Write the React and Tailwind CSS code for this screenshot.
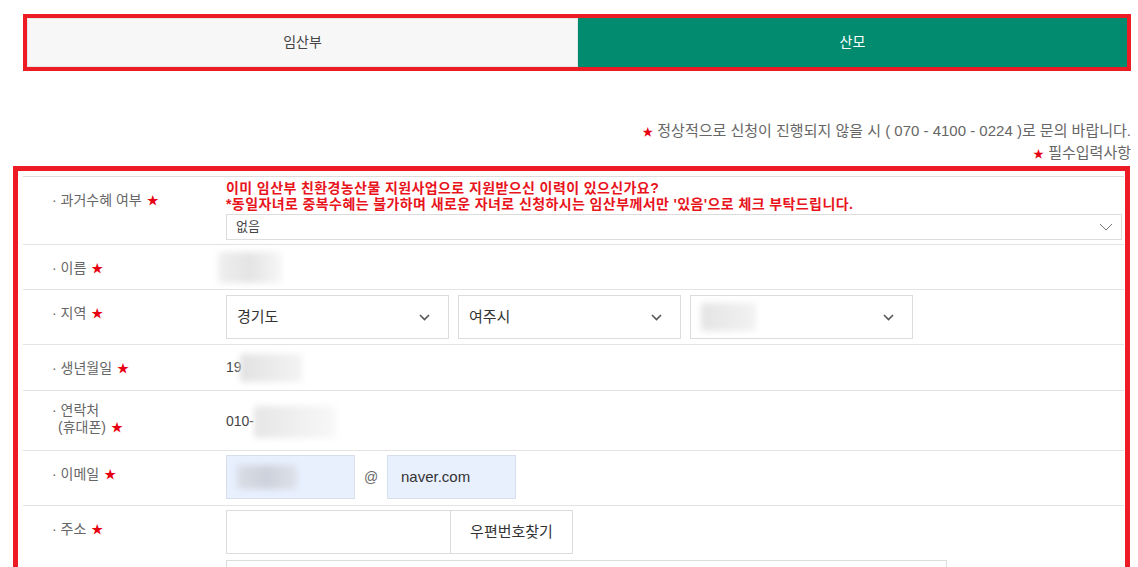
import React from 'react'

const FONT = "font-['Liberation_Sans','Noto_Sans_CJK_KR',sans-serif]"

function Star() {
  return <span className="ml-[5px] text-[12px] text-[#e60012]">★</span>
}

function Chevron({ thin = false }) {
  if (thin) {
    return (
      <svg width="14" height="8" viewBox="0 0 14 8" className="shrink-0">
        <polyline points="1,1 7,7 13,1" fill="none" stroke="#777" strokeWidth="1" />
      </svg>
    )
  }
  return (
    <svg width="11" height="7" viewBox="0 0 11 7" className="shrink-0">
      <polyline points="1,1 5.5,5.5 10,1" fill="none" stroke="#555" strokeWidth="1.6" />
    </svg>
  )
}

function Blur({ className }) {
  return <div className={`rounded-[3px] blur-[3px] ${className}`} />
}

function Row({ label, height, labelPad = 'pt-[15px]', children, valueClass = '' }) {
  return (
    <div className={`flex border-b border-[#e3e3e3] ${height}`}>
      <div className={`w-[203px] shrink-0 pl-[29px] ${labelPad} text-[14px] leading-[17px] text-[#666]`}>
        {label}
      </div>
      <div className={`flex-1 ${valueClass}`}>{children}</div>
    </div>
  )
}

function Select({ value, blur = false }) {
  return (
    <div className="flex h-[44px] w-[223px] items-center justify-between border border-[#dcdcdc] bg-white pl-[10px] pr-[18px]">
      {blur ? (
        <Blur className="h-[28px] w-[55px] bg-linear-to-r from-[#e4e4e4] to-[#f2f2f2]" />
      ) : (
        <span className="text-[15px] text-[#333]">{value}</span>
      )}
      <Chevron />
    </div>
  )
}

export default function App() {
  return (
    <div className={`relative h-[567px] w-[1138px] overflow-hidden bg-white ${FONT}`}>
      {/* tabs */}
      <div className="ml-[23px] mt-[14px] flex h-[57px] w-[1108px] border-[4px] border-[#ed1c24]">
        <div className="flex flex-1 items-center justify-center border border-[#e6e6e6] bg-[#f7f7f7] text-[14px] text-[#444]">
          임산부
        </div>
        <div className="flex flex-1 items-center justify-center bg-[#038b6f] text-[14px] text-white">
          산모
        </div>
      </div>

      {/* notice */}
      <div className="mt-[50px] pr-[7px] text-right text-[15px] leading-[20px] text-[#666]">
        <span className="text-[11px] text-[#e60012]">★</span> 정상적으로 신청이 진행되지 않을 시 ( 070 - 4100 - 0224 )로 문의 바랍니다.
      </div>
      <div className="mt-[1px] pr-[7px] text-right text-[15px] leading-[20px] text-[#666]">
        <span className="text-[11px] text-[#e60012]">★</span> 필수입력사항
      </div>

      {/* form */}
      <div className="ml-[13px] mt-[2px] h-[420px] w-[1117px] border-[5px] border-[#ed1c24] pl-[5px] pr-px pt-[5px]">
        <div className="border-t border-[#dcdcdc]">
          <Row label={<>· 과거수혜 여부<Star /></>} height="h-[68px]" valueClass="pt-[3px] pr-[2px]">
            <div className="text-[14px] font-bold leading-[16px] tracking-[0.4px] text-[#e8141c]">
              이미 임산부 친환경농산물 지원사업으로 지원받으신 이력이 있으신가요?
            </div>
            <div className="text-[14px] font-bold leading-[16px] tracking-[0.4px] text-[#e8141c]">
              *동일자녀로 중복수혜는 불가하며 새로운 자녀로 신청하시는 임산부께서만 '있음'으로 체크 부탁드립니다.
            </div>
            <div className="mt-[2px] flex h-[26px] items-center justify-between border border-[#dcdcdc] pl-[9px] pr-[8px]">
              <span className="text-[13px] text-[#444]">없음</span>
              <Chevron thin />
            </div>
          </Row>

          <Row label={<>· 이름<Star /></>} height="h-[45px]" valueClass="pt-[7px]">
            <Blur className="ml-[-8px] h-[31px] w-[64px] bg-linear-to-r from-[#efefef] via-[#e4e4e4] to-[#f7f7f7]" />
          </Row>

          <Row label={<>· 지역<Star /></>} height="h-[55px]" valueClass="pt-[5px]">
            <div className="flex gap-[9px]">
              <Select value="경기도" />
              <Select value="여주시" />
              <Select blur />
            </div>
          </Row>

          <Row label={<>· 생년월일<Star /></>} height="h-[46px]" valueClass="flex items-center">
            <span className="text-[14px] text-[#444]">19</span>
            <Blur className="ml-[-2px] h-[28px] w-[62px] bg-linear-to-r from-[#e2e2e2] to-[#f3f3f3]" />
          </Row>

          <Row
            label={<><div>· 연락처</div><div className="pl-[6px]">(휴대폰)<Star /></div></>}
            height="h-[60px]"
            labelPad="pt-[11px]"
            valueClass="flex items-center pt-[2px]"
          >
            <span className="text-[14px] text-[#444]">010-</span>
            <Blur className="h-[32px] w-[82px] bg-linear-to-r from-[#e6e6e6] to-[#f8f8f8]" />
          </Row>

          <Row label={<>· 이메일<Star /></>} height="h-[55px]" valueClass="pt-[4px]">
            <div className="flex items-center">
              <div className="flex h-[44px] w-[129px] items-center border border-[#d8dfec] bg-[#e8f0fe] pl-[10px]">
                <Blur className="h-[24px] w-[60px] bg-linear-to-r from-[#d9dde6] via-[#cdd1db] to-[#dde2ea]" />
              </div>
              <span className="w-[32px] text-center text-[14px] text-[#666]">@</span>
              <div className="flex h-[44px] w-[129px] items-center border border-[#d8dfec] bg-[#e8f0fe] pl-[13px] text-[15px] text-[#333]">
                naver.com
              </div>
            </div>
          </Row>

          <Row label={<>· 주소<Star /></>} height="h-[70px]" valueClass="pt-[4px]">
            <div className="flex">
              <div className="h-[44px] w-[225px] border border-[#dcdcdc] bg-white" />
              <div className="flex h-[44px] w-[122px] items-center justify-center border border-l-0 border-[#dcdcdc] bg-white text-[15px] text-[#333]">
                우편번호찾기
              </div>
            </div>
            <div className="mt-[6px] h-[44px] w-[721px] border border-[#dcdcdc] bg-white" />
          </Row>
        </div>
      </div>
    </div>
  )
}
